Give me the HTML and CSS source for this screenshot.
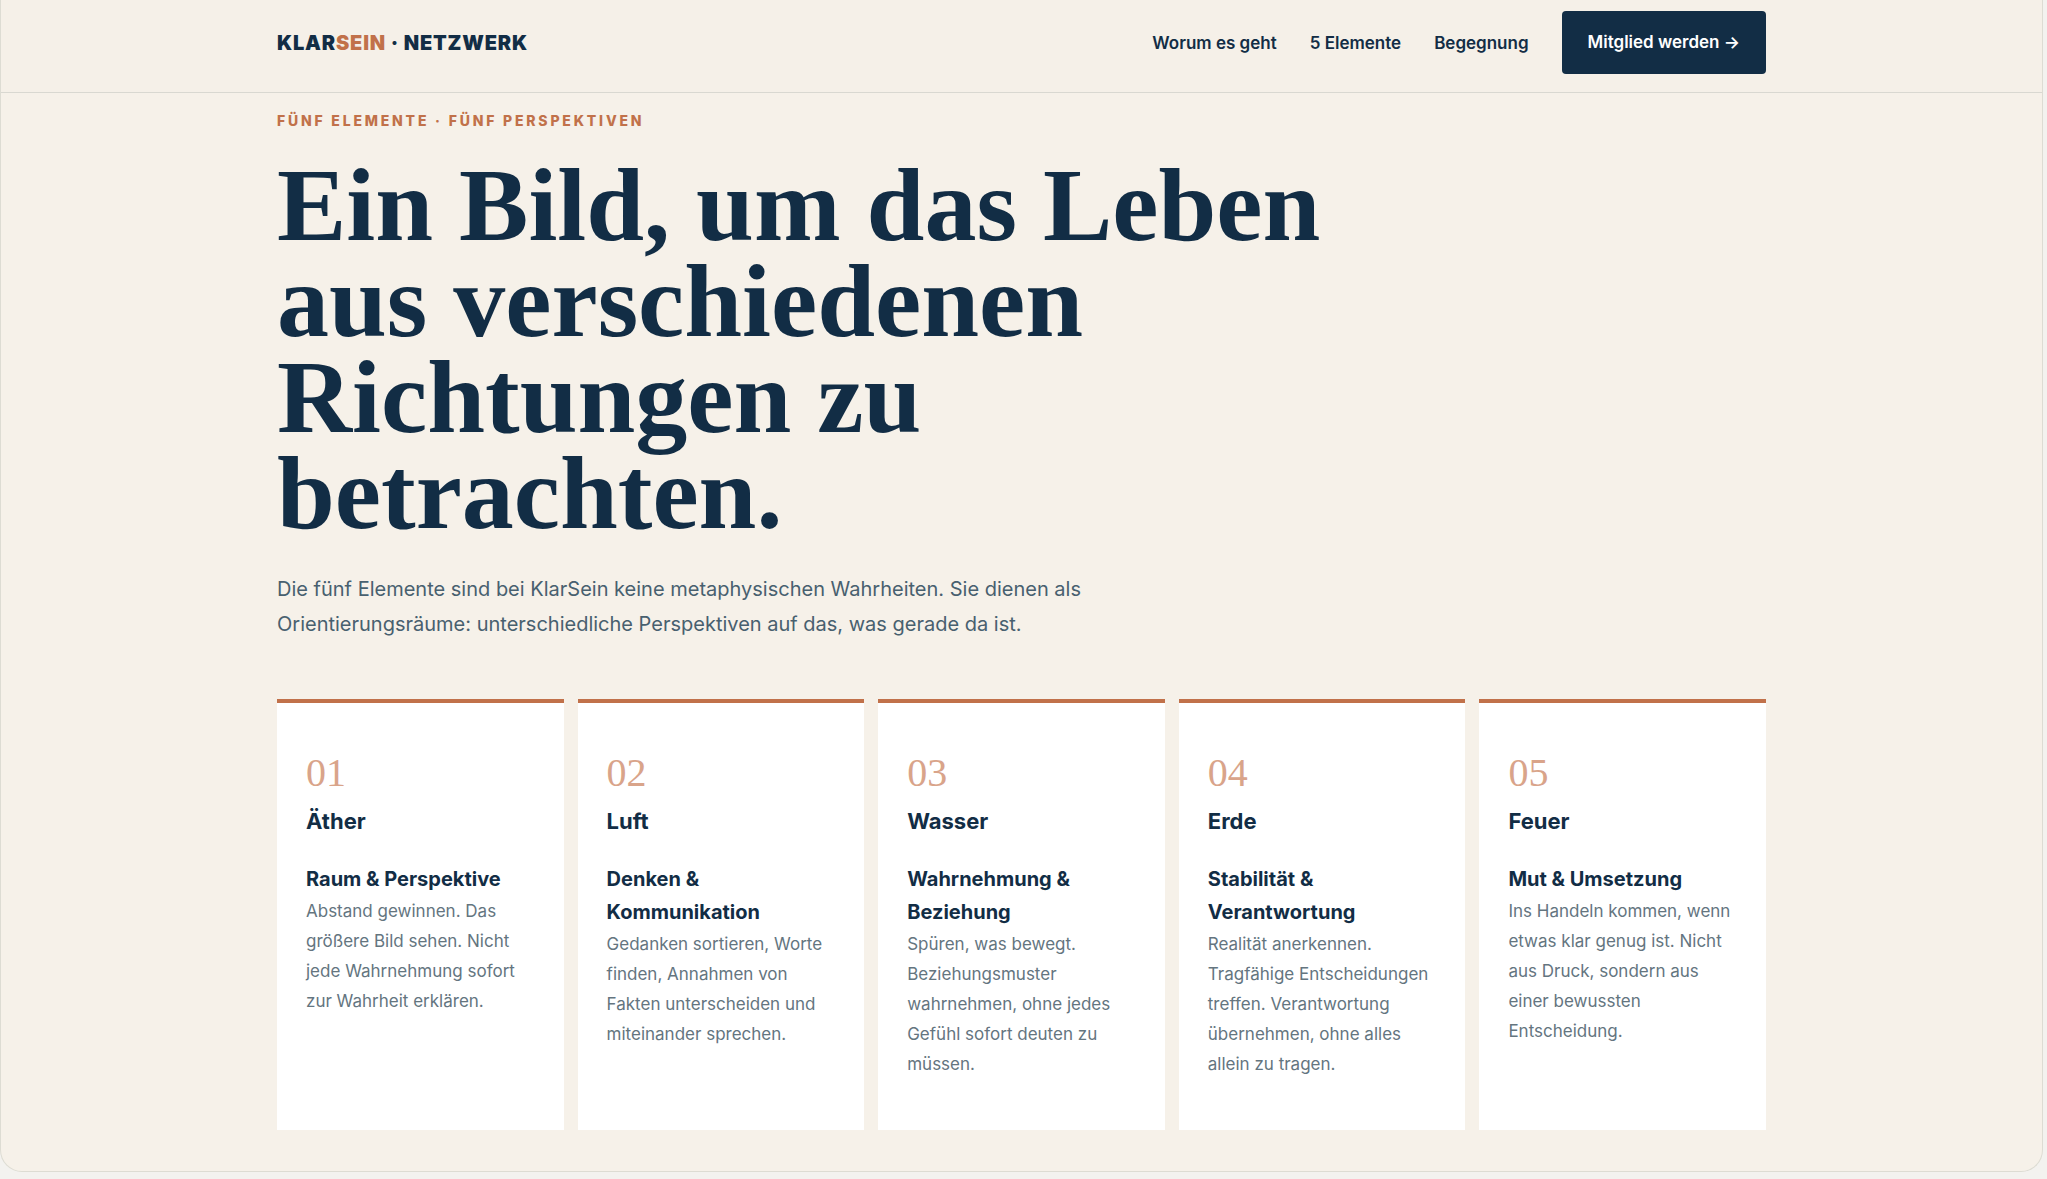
FILE: index.html
```html
<!DOCTYPE html>
<html lang="de">
<head>
  <meta charset="UTF-8" />
  <meta name="viewport" content="width=device-width, initial-scale=1.0"/>
  <title>KlarSein · Netzwerk</title>
  <link rel="stylesheet" href="styles.css">
</head>
<body>
  <div class="page">
    <header class="site-header">
      <div class="container header-inner">
        <a href="#" class="logo">KLAR<span>SEIN</span> · NETZWERK</a>
        <nav class="nav">
          <a href="#worum">Worum es geht</a>
          <a href="#elemente">5 Elemente</a>
          <a href="#begegnung">Begegnung</a>
          <a href="#mitglied" class="btn">Mitglied werden →</a>
        </nav>
      </div>
    </header>

    <main class="container" id="elemente">
      <p class="eyebrow">FÜNF ELEMENTE · FÜNF PERSPEKTIVEN</p>
      <h1>Ein Bild, um das Leben<br>aus verschiedenen<br>Richtungen zu<br>betrachten.</h1>
      <p class="lead">Die fünf Elemente sind bei KlarSein keine metaphysischen Wahrheiten. Sie dienen als Orientierungsräume: unterschiedliche Perspektiven auf das, was gerade da ist.</p>

      <div class="elements">
        <article class="element">
          <div class="num">01</div>
          <h2>Äther</h2>
          <strong>Raum &amp; Perspektive</strong>
          <p>Abstand gewinnen. Das größere Bild sehen. Nicht jede Wahrnehmung sofort zur Wahrheit erklären.</p>
        </article>
        <article class="element">
          <div class="num">02</div>
          <h2>Luft</h2>
          <strong>Denken &amp; Kommunikation</strong>
          <p>Gedanken sortieren, Worte finden, Annahmen von Fakten unterscheiden und miteinander sprechen.</p>
        </article>
        <article class="element">
          <div class="num">03</div>
          <h2>Wasser</h2>
          <strong>Wahrnehmung &amp; Beziehung</strong>
          <p>Spüren, was bewegt. Beziehungsmuster wahrnehmen, ohne jedes Gefühl sofort deuten zu müssen.</p>
        </article>
        <article class="element">
          <div class="num">04</div>
          <h2>Erde</h2>
          <strong>Stabilität &amp; Verantwortung</strong>
          <p>Realität anerkennen. Tragfähige Entscheidungen treffen. Verantwortung übernehmen, ohne alles allein zu tragen.</p>
        </article>
        <article class="element">
          <div class="num">05</div>
          <h2>Feuer</h2>
          <strong>Mut &amp; Umsetzung</strong>
          <p>Ins Handeln kommen, wenn etwas klar genug ist. Nicht aus Druck, sondern aus einer bewussten Entscheidung.</p>
        </article>
      </div>
    </main>
  </div>
</body>
</html>
```
FILE: styles.css
```css
:root {
  --navy: #122d45;
  --copper: #c1714a;
  --sand: #f6f1e9;
  --line: #d9d8d1;
}

* {
  box-sizing: border-box;
}

body {
  margin: 0;
  padding: 0 4px 4px 0;
  background: #f3f2ef;
  color: var(--navy);
  font-family: Inter, "Liberation Sans", sans-serif;
}

h1, h2, p {
  margin: 0;
}

a {
  color: inherit;
  text-decoration: none;
}

.page {
  background: var(--sand);
  border: 1px solid #dddcd3;
  border-top: 0;
  border-radius: 0 0 22px 22px;
  padding-bottom: 41px;
}

.container {
  width: calc(100% - 48px);
  max-width: 1489px;
  margin: 0 auto;
}

.site-header {
  background: #f5f0e8;
  border-bottom: 1px solid var(--line);
  padding: 11px 0 18px;
}

.header-inner {
  display: flex;
  align-items: center;
  justify-content: space-between;
}

.logo {
  font-size: 20px;
  font-weight: 900;
  letter-spacing: 0.04em;
}

.logo span {
  color: var(--copper);
}

.nav {
  display: flex;
  align-items: center;
  gap: 33px;
  font-size: 17px;
  font-weight: 600;
}

.btn {
  background: var(--navy);
  color: #fff;
  border-radius: 4px;
  padding: 0 26px;
  line-height: 63px;
}

.eyebrow {
  padding-top: 16px;
  color: var(--copper);
  font-size: 14px;
  line-height: 24px;
  font-weight: 800;
  letter-spacing: 0.2em;
}

h1 {
  margin-top: 24px;
  font-family: Georgia, "Liberation Serif", serif;
  font-size: 104px;
  line-height: 96px;
  font-weight: 700;
}

.lead {
  max-width: 860px;
  margin-top: 31px;
  color: #48606f;
  font-size: 20px;
  line-height: 35px;
}

.elements {
  display: grid;
  grid-template-columns: repeat(5, 1fr);
  gap: 14px;
  margin-top: 57px;
}

.element {
  background: #fff;
  border-top: 4px solid var(--copper);
  padding: 46px 28px 51px 29px;
}

.num {
  color: #d9a48a;
  font-family: Georgia, "Liberation Serif", serif;
  font-size: 40px;
  line-height: 48px;
}

.element h2 {
  margin: 6px 0 24px;
  font-size: 22px;
  line-height: 36px;
  font-weight: 700;
}

.element strong {
  display: block;
  font-size: 20px;
  line-height: 33px;
  font-weight: 700;
}

.element p {
  color: #64757f;
  font-size: 17px;
  line-height: 30px;
}
```
